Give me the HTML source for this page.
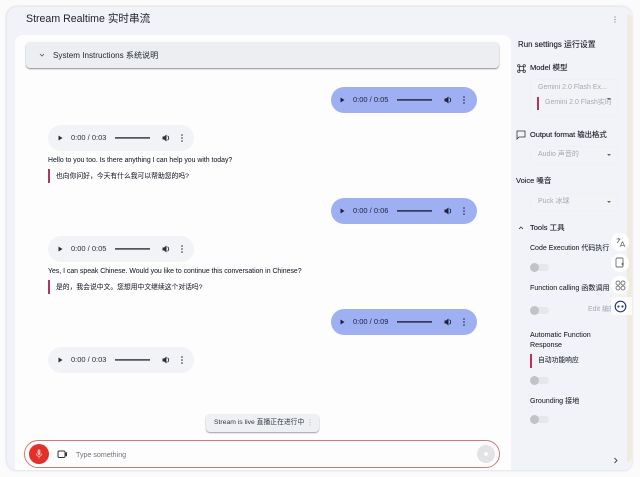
<!DOCTYPE html>
<html>
<head>
<meta charset="utf-8">
<style>
html,body{margin:0;padding:0;background:#fbfbfc;}
body{width:640px;height:477px;position:relative;overflow:hidden;font-family:"Liberation Sans","Noto Sans CJK SC",sans-serif;color:#1f2430;}
#p{position:absolute;left:0;top:0;width:640px;height:477px;filter:blur(.25px);}
.a{position:absolute;white-space:nowrap;}
.t{position:absolute;white-space:nowrap;line-height:12px;}
.player{position:absolute;width:146px;height:26px;border-radius:13px;font-size:7.5px;color:#2a2f3a;}
.player.b{background:#9fb0f2;color:#1c2140;}
.player.g{background:#f1f3f6;}
.player svg{position:absolute;left:0;top:0;}
.player span{position:absolute;left:22px;top:7px;line-height:12px;white-space:nowrap;}
.sw{position:absolute;width:19px;height:9px;}
.sw i{position:absolute;left:5px;top:1px;width:14px;height:7px;border-radius:4px;background:#e6e7ea;}
.sw b{position:absolute;left:0;top:0;width:9px;height:9px;border-radius:50%;background:#c2c3c6;}
.fab{position:absolute;left:611px;width:18px;height:18px;border-radius:50%;background:#fff;}
.sel{position:absolute;left:530px;width:88px;background:#f2f3f7;border:1px solid #eff0f4;border-radius:3px;box-sizing:border-box;}
.arrow{position:absolute;width:0;height:0;border-left:2px solid transparent;border-right:2px solid transparent;border-top:2px solid #666;}
.m{font-size:6.9px;color:#1a1e28;-webkit-text-stroke:.05px #1a1e28;}
.z{font-size:6.8px;color:#1a1e28;-webkit-text-stroke:.05px #1a1e28;}
.s{font-size:7.5px;color:#14171f;-webkit-text-stroke:.1px #14171f;}
</style>
</head>
<body>
<div id="p">
<svg width="0" height="0" style="position:absolute"><symbol id="ctl" viewBox="0 0 146 26"><path d="M10.5 10.5l4 2.5-4 2.5z" fill="currentColor"/><rect x="67" y="12.2" width="35" height="1.4" fill="currentColor"/><path d="M114.500 11.500h1.500l2.500-2v7l-2.500-2h-1.500z" fill="currentColor"/><path d="M119.500 10.800a2.600 2.600 0 0 1 0 4.400" stroke="currentColor" stroke-width=".9" fill="none"/><circle cx="134" cy="10" r=".8" fill="currentColor"/><circle cx="134" cy="13" r=".8" fill="currentColor"/><circle cx="134" cy="16" r=".8" fill="currentColor"/></symbol></svg>

<div class="a" style="left:7px;top:7px;width:625px;height:463px;background:#f1f3f8;border-radius:10px 10px 8px 10px;box-shadow:0 -1px 2px #e2e3e6,-1px 0 2px #e2e4e8,0 1px 2px #e4e5e8"></div>
<div class="a" style="left:627px;top:14px;width:5px;height:448px;background:#efebe2;border-radius:0 6px 6px 0"></div>
<div class="a" style="left:15px;top:35px;width:496px;height:435px;background:#fdfdfe;border-radius:8px 8px 0 0"></div>

<div class="t" style="left:26px;top:13px;font-size:10.6px;color:#20242c">Stream Realtime 实时串流</div>
<svg class="a" style="left:613px;top:16px" width="4" height="8"><circle cx="2" cy="1" r=".6" fill="#777"/><circle cx="2" cy="3.500" r=".6" fill="#777"/><circle cx="2" cy="6" r=".6" fill="#777"/></svg>

<div class="a" style="left:26px;top:42px;width:473px;height:26px;background:#eceef2;border-radius:4px;box-shadow:0 1px 1.500px #8a8d92"></div>
<svg class="a" style="left:39px;top:52px" width="6" height="6"><path d="M1 2l2 2 2-2" fill="none" stroke="#555" stroke-width=".8"/></svg>
<div class="t" style="left:53px;top:49.500px;font-size:8.100px;color:#242832">System Instructions 系统说明</div>

<div class="player b" style="left:331px;top:87px"><svg width="146" height="26"><use href="#ctl" x="-1"/></svg><span>0:00 / 0:05</span></div>
<div class="player b" style="left:331px;top:198px"><svg width="146" height="26"><use href="#ctl" x="-1"/></svg><span>0:00 / 0:06</span></div>
<div class="player b" style="left:331px;top:309px"><svg width="146" height="26"><use href="#ctl" x="-1"/></svg><span>0:00 / 0:09</span></div>

<div class="player g" style="left:48px;top:125px"><svg width="146" height="26"><use href="#ctl"/></svg><span style="left:23px">0:00 / 0:03</span></div>
<div class="player g" style="left:48px;top:236px"><svg width="146" height="26"><use href="#ctl"/></svg><span style="left:23px">0:00 / 0:05</span></div>
<div class="player g" style="left:48px;top:347px"><svg width="146" height="26"><use href="#ctl"/></svg><span style="left:23px">0:00 / 0:03</span></div>

<div class="t m" style="left:48px;top:155px">Hello to you too. Is there anything I can help you with today?</div>
<div class="a" style="left:48px;top:169px;width:2px;height:14px;background:#b0355f"></div>
<div class="t z" style="left:56px;top:171px">也向你问好，今天有什么我可以帮助您的吗?</div>

<div class="t m" style="left:48px;top:266px">Yes, I can speak Chinese. Would you like to continue this conversation in Chinese?</div>
<div class="a" style="left:48px;top:280px;width:2px;height:14px;background:#b0355f"></div>
<div class="t z" style="left:56px;top:282px">是的，我会说中文。您想用中文继续这个对话吗?</div>

<div class="a" style="left:206px;top:414px;width:113px;height:18px;background:#eef0f4;border-radius:4px;box-shadow:0 1px 1.500px #9a9da3"></div>
<div class="t" style="left:214px;top:417px;font-size:6.800px;color:#333944">Stream is live 直播正在进行中</div>
<svg class="a" style="left:308px;top:419px" width="4" height="8"><circle cx="2" cy="1" r=".5" fill="#999"/><circle cx="2" cy="3.500" r=".5" fill="#999"/><circle cx="2" cy="6" r=".5" fill="#999"/></svg>

<div class="a" style="left:24px;top:440px;width:476px;height:28px;box-sizing:border-box;border:1px solid #cf7b74;border-radius:14px;background:#fdfdfe"></div>
<div class="a" style="left:29px;top:444px;width:20px;height:20px;border-radius:50%;background:#e3302a"></div>
<svg class="a" style="left:35px;top:449px" width="8" height="10"><rect x="2.600" y="0.500" width="2.800" height="5.500" rx="1.400" fill="#f4b9b5"/><path d="M1.200 4.500a2.800 2.800 0 0 0 5.600 0M4 7.500v2" fill="none" stroke="#f4b9b5" stroke-width=".8"/></svg>
<svg class="a" style="left:57px;top:450px" width="11" height="9"><rect x="1" y="1" width="7" height="6.500" rx="1.200" fill="none" stroke="#333" stroke-width="1"/><path d="M8 3l2-1v4.500l-2-1z" fill="#333"/></svg>
<div class="t" style="left:76px;top:448.500px;font-size:7.100px;color:#6d727a">Type something</div>
<div class="a" style="left:477px;top:445px;width:18px;height:18px;border-radius:50%;background:#e3e3e5"></div>
<div class="a" style="left:484px;top:452px;width:4px;height:4px;border-radius:50%;background:#fafafa"></div>

<div class="t s" style="left:518px;top:39px;font-size:7.900px">Run settings 运行设置</div>
<svg class="a" style="left:517px;top:64px" width="9" height="9"><path d="M2.500 2.500h4v4h-4z" fill="none" stroke="#333" stroke-width=".8"/><circle cx="1.800" cy="1.800" r="1.200" fill="none" stroke="#333" stroke-width=".8"/><circle cx="7.200" cy="1.800" r="1.200" fill="none" stroke="#333" stroke-width=".8"/><circle cx="1.800" cy="7.200" r="1.200" fill="none" stroke="#333" stroke-width=".8"/><circle cx="7.200" cy="7.200" r="1.200" fill="none" stroke="#333" stroke-width=".8"/></svg>
<div class="t s" style="left:530px;top:62px">Model 模型</div>
<div class="sel" style="top:79px;height:37px"></div>
<div class="t" style="left:538px;top:82px;font-size:7px;color:#a6a9b0">Gemini 2.0 Flash Ex...</div>
<div class="a" style="left:537px;top:97px;width:2px;height:13px;background:#b0355f"></div>
<div class="t" style="left:545px;top:97px;font-size:7px;color:#a6a9b0">Gemini 2.0 Flash实时</div>
<div class="arrow" style="left:607px;top:98px"></div>

<svg class="a" style="left:516px;top:130px" width="11" height="10"><path d="M1 1h8v6H3L1 9z" fill="none" stroke="#333" stroke-width=".8"/></svg>
<div class="t s" style="left:530px;top:129px;font-size:7.400px">Output format 输出格式</div>
<div class="sel" style="top:146px;height:18px"></div>
<div class="t" style="left:538px;top:149px;font-size:7px;color:#a6a9b0">Audio 声音的</div>
<div class="arrow" style="left:607px;top:154px"></div>

<div class="t s" style="left:516px;top:175px">Voice 嗓音</div>
<div class="sel" style="top:193px;height:18px"></div>
<div class="t" style="left:538px;top:196px;font-size:7px;color:#a6a9b0">Puck 冰球</div>
<div class="arrow" style="left:607px;top:201px"></div>

<svg class="a" style="left:518px;top:225px" width="6" height="6"><path d="M1 4l2-2 2 2" fill="none" stroke="#333" stroke-width=".8"/></svg>
<div class="t s" style="left:530px;top:222px">Tools 工具</div>

<div class="t m" style="left:530px;top:243px;font-size:7px">Code Execution 代码执行</div>
<div class="sw" style="left:530px;top:263px"><i></i><b></b></div>
<div class="t m" style="left:530px;top:282px;font-size:7.100px">Function calling 函数调用</div>
<div class="sw" style="left:530px;top:306px"><i></i><b></b></div>
<div class="t" style="left:588px;top:304px;font-size:7px;color:#a6a9b0">Edit 编辑</div>

<div class="t m" style="left:530px;top:329px;font-size:7.100px">Automatic Function</div>
<div class="t m" style="left:530px;top:339px;font-size:7.100px">Response</div>
<div class="a" style="left:530px;top:354px;width:2px;height:14px;background:#c2304f"></div>
<div class="t m" style="left:538px;top:355px;font-size:6.800px">自动功能响应</div>
<div class="sw" style="left:530px;top:376px"><i></i><b></b></div>
<div class="t m" style="left:530px;top:395px;font-size:7.100px">Grounding 接地</div>
<div class="sw" style="left:530px;top:415px"><i></i><b></b></div>
<svg class="a" style="left:613px;top:457px" width="5" height="7"><path d="M1.500 1l2.500 2.500L1.500 6" fill="none" stroke="#444" stroke-width=".9"/></svg>

<div class="a" style="left:611px;top:297px;width:21px;height:18px;background:#fbfbf3"></div>
<div class="fab" style="top:233px"></div>
<div class="fab" style="top:254px"></div>
<div class="fab" style="top:276px"></div>
<div class="fab" style="top:297px"></div>
<svg class="a" style="left:615px;top:237px" width="11" height="11"><path d="M1.500 2h4M3.500 1v1M2 6l3-4M7.500 4.500L5 10M7.500 4.500L10 10M5.800 8.500h3.500" fill="none" stroke="#6a6d75" stroke-width=".8"/></svg>
<svg class="a" style="left:615px;top:257px" width="10" height="12"><rect x="1" y="1" width="7" height="9" rx="1" fill="none" stroke="#6a6d75" stroke-width=".9"/><path d="M6 7h3M7.500 5.500v3" stroke="#6a6d75" stroke-width=".8"/></svg>
<svg class="a" style="left:614.500px;top:279.500px" width="11" height="11"><circle cx="3" cy="3" r="2" fill="none" stroke="#777" stroke-width=".9"/><circle cx="8" cy="3" r="2" fill="none" stroke="#777" stroke-width=".9"/><circle cx="3" cy="8" r="2" fill="none" stroke="#777" stroke-width=".9"/><circle cx="8" cy="8" r="2" fill="none" stroke="#777" stroke-width=".9"/></svg>
<svg class="a" style="left:613.500px;top:299.500px" width="13" height="13"><circle cx="6.500" cy="6.500" r="5.300" fill="#fff" stroke="#2e3388" stroke-width="1.200"/><circle cx="4.500" cy="6.500" r="1.100" fill="#2e3388"/><circle cx="8.500" cy="6.500" r="1.100" fill="#2e3388"/></svg>
</div>
</body>
</html>
